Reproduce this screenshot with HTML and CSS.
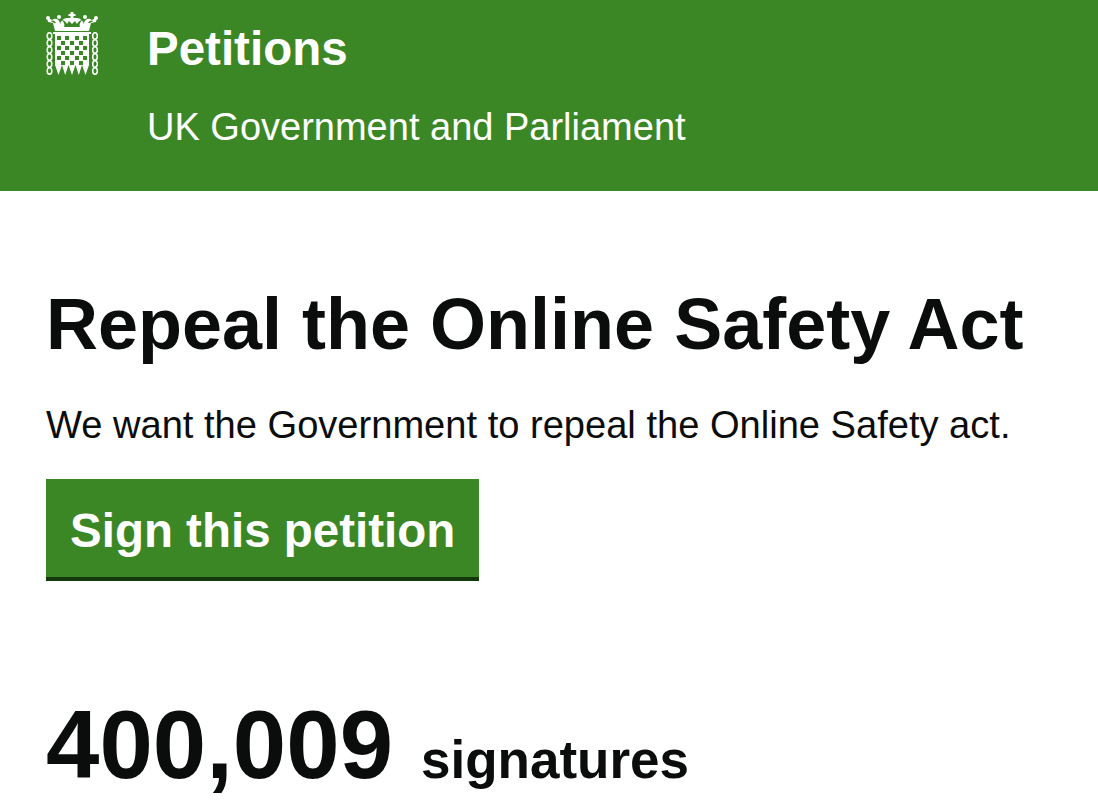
FILE: index.html
```html
<!DOCTYPE html>
<html lang="en">
<head>
<meta charset="utf-8">
<title>Repeal the Online Safety Act - Petitions</title>
<link rel="stylesheet" href="styles.css">
</head>
<body>
<header class="site-header">
  <svg class="crest" viewBox="0 0 54 66" width="54" height="66" aria-hidden="true">
    <g fill="#fff">
      <path d="M7 8 C11 5 15 8 15 12 C16 9 19 6 22 6 L25.5 6 L25.5 4 L23.5 4 L23.5 2 L25.5 2 L25.5 0 L28.5 0 L28.5 2 L30.5 2 L30.5 4 L28.5 4 L28.5 6 L32 6 C35 6 38 9 39 12 C39 8 43 5 47 8 L52 5 L51 10 L46 11 L44 19 L10 19 L8 11 L3 10 L2 5 Z"/>
      <circle cx="3" cy="6" r="2"/><circle cx="51" cy="6" r="2"/><circle cx="14" cy="5" r="2"/><circle cx="40" cy="5" r="2"/>
      <path d="M8 20 H46 V22 H44 V53 L40.5 63 L37 53 L33.8 63 L30.5 53 L27 63 L23.5 53 L20.2 63 L17 53 L13.5 63 L10 53 V22 H8 Z"/>
    </g>
    <g fill="#3b8726">
      <path d="M16 8 C19 9 20 13 19 15 L35 15 C34 13 35 9 38 8 C35 8 33 10 32 12 L30 9 L27 12 L24 9 L22 12 C21 10 19 8 16 8 Z"/>
      <path d="M6 9 C8 8 10 9 11 11 L9 11 C8 10 7 10 6 9 Z"/>
      <path d="M48 9 C46 8 44 9 43 11 L45 11 C46 10 47 10 48 9 Z"/>
      <rect x="12" y="24" width="4" height="4"/><rect x="20" y="24" width="4" height="4"/><rect x="30" y="24" width="4" height="4"/><rect x="38" y="24" width="4" height="4"/>
      <rect x="16" y="29" width="4" height="4"/><rect x="25" y="29" width="4" height="4"/><rect x="34" y="29" width="4" height="4"/>
      <rect x="12" y="34" width="4" height="4"/><rect x="20" y="34" width="4" height="4"/><rect x="30" y="34" width="4" height="4"/><rect x="38" y="34" width="4" height="4"/>
      <rect x="16" y="39" width="4" height="4"/><rect x="25" y="39" width="4" height="4"/><rect x="34" y="39" width="4" height="4"/>
      <rect x="12" y="44" width="4" height="4"/><rect x="20" y="44" width="4" height="4"/><rect x="30" y="44" width="4" height="4"/><rect x="38" y="44" width="4" height="4"/>
      <rect x="16" y="49" width="4" height="4"/><rect x="25" y="49" width="4" height="4"/><rect x="34" y="49" width="4" height="4"/>
    </g>
    <g fill="none" stroke="#fff" stroke-width="1.5">
      <ellipse cx="4.5" cy="24" rx="2.3" ry="3.2"/><ellipse cx="4.5" cy="31" rx="2.3" ry="3.2"/><ellipse cx="4.5" cy="38" rx="2.3" ry="3.2"/><ellipse cx="4.5" cy="45" rx="2.3" ry="3.2"/><ellipse cx="4.5" cy="52" rx="2.3" ry="3.2"/><ellipse cx="4.5" cy="59" rx="2.3" ry="3.2"/>
      <ellipse cx="50" cy="24" rx="2.3" ry="3.2"/><ellipse cx="50" cy="31" rx="2.3" ry="3.2"/><ellipse cx="50" cy="38" rx="2.3" ry="3.2"/><ellipse cx="50" cy="45" rx="2.3" ry="3.2"/><ellipse cx="50" cy="52" rx="2.3" ry="3.2"/><ellipse cx="50" cy="59" rx="2.3" ry="3.2"/>
    </g>
  </svg>
  <div class="brand">
    <div class="brand-title">Petitions</div>
    <div class="brand-sub">UK Government and Parliament</div>
  </div>
</header>
<main class="content">
  <h1 class="headline">Repeal the Online Safety Act</h1>
  <p class="summary">We want the Government to repeal the Online Safety act.</p>
  <a class="sign-button" href="#">Sign this petition</a>
  <div class="count"><span class="count-num">400,009</span><span class="count-label">signatures</span></div>
</main>
</body>
</html>
```
FILE: styles.css
```css
html, body { margin: 0; padding: 0; background: #fff; overflow: hidden; }
body { font-family: "Liberation Sans", Arial, sans-serif; color: #0b0c0c; }
.site-header { background: #3b8726; height: 191px; display: flex; align-items: flex-start; padding: 12px 0 0 45px; box-sizing: border-box; color: #fff; gap: 48px; }
.crest { flex: none; }
.brand { display: flex; flex-direction: column; }
.brand-title { font-size: 47.5px; font-weight: 700; line-height: 74px; }
.brand-sub { font-size: 38px; line-height: 42px; margin-top: 20px; }
.content { padding: 0 0 0 46px; }
.headline { font-size: 72px; line-height: 80px; font-weight: 700; margin: 93px 0 0; }
.summary { font-size: 38.1px; line-height: 44px; margin: 39px 0 0; }
.sign-button { display: inline-block; margin-top: 32px; background: #3b8726; color: #fff; font-weight: 700; font-size: 47.5px; line-height: 103px; height: 98px; padding: 0 24px; border-bottom: 4px solid #12380b; text-decoration: none; }
.count { margin-top: 114px; display: flex; align-items: baseline; }
.count-num { font-size: 96px; font-weight: 700; line-height: 100px; }
.count-label { font-size: 53px; font-weight: 700; margin-left: 28px; }
```
